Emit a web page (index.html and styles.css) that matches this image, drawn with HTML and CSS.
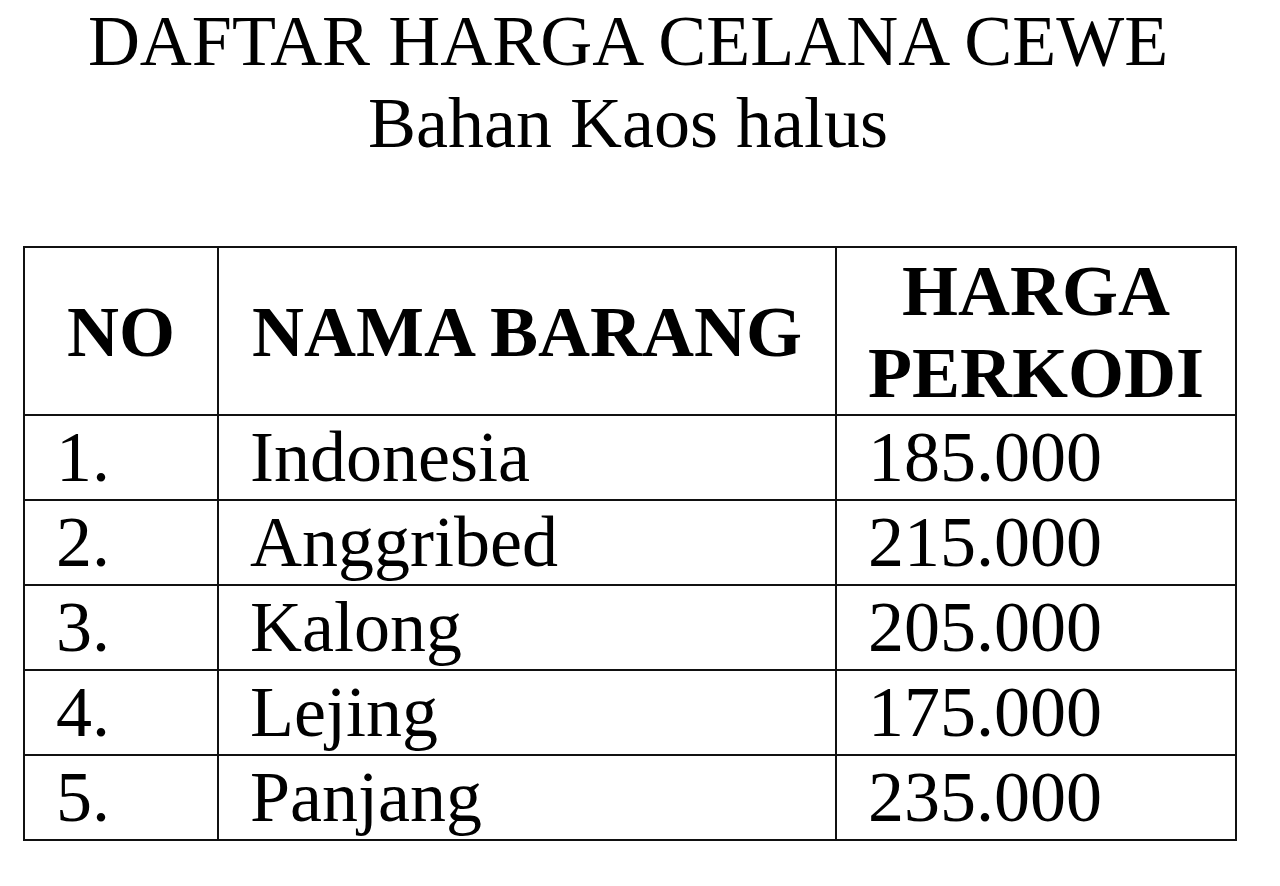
FILE: index.html
```html
<!DOCTYPE html>
<html lang="id">
<head>
<meta charset="utf-8">
<title>Daftar Harga Celana Cewe</title>
<link rel="stylesheet" href="styles.css">
</head>
<body>
<div class="page">
  <h1 class="title">DAFTAR HARGA CELANA CEWE<br>Bahan Kaos halus</h1>
  <table class="price-table">
    <colgroup>
      <col class="c-no">
      <col class="c-name">
      <col class="c-price">
    </colgroup>
    <thead>
      <tr>
        <th class="h-no">NO</th>
        <th class="h-name">NAMA BARANG</th>
        <th class="h-price">HARGA<br>PERKODI</th>
      </tr>
    </thead>
    <tbody>
      <tr><td>1.</td><td>Indonesia</td><td>185.000</td></tr>
      <tr><td>2.</td><td>Anggribed</td><td>215.000</td></tr>
      <tr><td>3.</td><td>Kalong</td><td>205.000</td></tr>
      <tr><td>4.</td><td>Lejing</td><td>175.000</td></tr>
      <tr><td>5.</td><td>Panjang</td><td>235.000</td></tr>
    </tbody>
  </table>
</div>
</body>
</html>
```
FILE: styles.css
```css
html, body {
  margin: 0;
  padding: 0;
  background: #ffffff;
}
body {
  font-family: "Liberation Serif", "Times New Roman", serif;
  color: #000000;
}
.page {
  width: 1280px;
  height: 886px;
  overflow: hidden;
}
.title {
  margin: 0;
  font-size: 72px;
  font-weight: normal;
  line-height: 82px;
  text-align: center;
  padding-right: 24px;
}
.price-table {
  margin: 82px 0 0 23px;
  width: 1212px;
  border-collapse: collapse;
  table-layout: fixed;
  font-size: 72px;
}
.c-no { width: 194px; }
.c-name { width: 618px; }
.c-price { width: 400px; }
.price-table th,
.price-table td {
  border: 2px solid #111111;
  padding: 0 0 0 31px;
  line-height: 83px;
  vertical-align: middle;
  white-space: nowrap;
}
.price-table th {
  font-weight: bold;
  line-height: 82px;
  padding: 2px 0 0 0;
  text-align: center;
}
.price-table td {
  text-align: left;
}
.h-name {
  text-align: center;
}
```
